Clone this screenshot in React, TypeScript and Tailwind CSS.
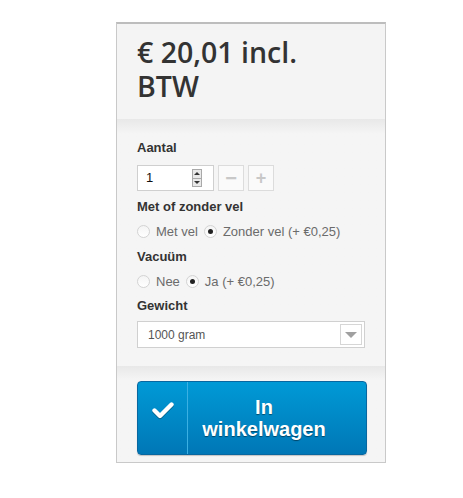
import React from "react";

function Radio({ checked, label }: { checked?: boolean; label: string }) {
  return (
    <label className="flex items-center gap-[6px] mr-[6px]">
      <span className="flex h-[13px] w-[13px] items-center justify-center rounded-full border border-[#d3d3d3] bg-gradient-to-b from-[#f4f4f4] to-white">
        {checked && <span className="h-[5px] w-[5px] rounded-full bg-[#222]" />}
      </span>
      <span className="text-[13px] text-[#6b6b6b]">{label}</span>
    </label>
  );
}

export default function App() {
  return (
    <div className="min-h-[498px] bg-white pt-[22px] font-['Liberation_Sans',Arial,sans-serif]">
      <div className="ml-[116px] w-[270px] border border-t-2 border-[#c9c9c9] border-t-[#bdbdbd] bg-[#f4f4f4]">
        <div className="px-[20px] pt-[11px] pb-[16px]">
          <h1 className="font-['Open_Sans',sans-serif] text-[28.5px] font-semibold leading-[34px] text-[#333]">
            € 20,01 incl.
            <br />
            BTW
          </h1>
        </div>

        <div className="bg-gradient-to-b from-[#e8e8e8] via-[#f5f5f5] via-[6%] to-[#f5f5f5] px-[20px] pt-[20px] pb-[18px]">
          <div className="text-[13px] font-bold leading-[18px] text-[#333]">Aantal</div>
          <div className="mt-[8px] flex gap-[4px]">
            <div className="flex h-[26px] w-[77px] items-center justify-between border border-[#cfcfcf] bg-white pl-[8px] pr-[11px]">
              <span className="text-[13px] text-[#111]">1</span>
              <span className="flex h-[18px] w-[10px] flex-col border border-[#a9a9a9] bg-[#e9e9e9]">
                <span className="flex flex-1 items-center justify-center border-b border-[#a9a9a9]">
                  <span className="h-0 w-0 border-x-[3px] border-b-[3px] border-x-transparent border-b-[#333]" />
                </span>
                <span className="flex flex-1 items-center justify-center">
                  <span className="h-0 w-0 border-x-[3px] border-t-[3px] border-x-transparent border-t-[#333]" />
                </span>
              </span>
            </div>
            <div className="flex h-[26px] w-[26px] items-center justify-center border border-[#dcdcdc] bg-[#fafafa] text-[20px] font-bold leading-none text-[#c8c8c8]">
              −
            </div>
            <div className="flex h-[26px] w-[26px] items-center justify-center border border-[#dcdcdc] bg-[#fafafa] text-[18px] font-bold leading-none text-[#c8c8c8]">
              +
            </div>
          </div>

          <div className="mt-[7px] text-[13px] font-bold leading-[18px] text-[#333]">Met of zonder vel</div>
          <div className="mt-[6px] flex items-center">
            <Radio label="Met vel" />
            <Radio checked label="Zonder vel (+ €0,25)" />
          </div>

          <div className="mt-[6px] text-[13px] font-bold leading-[18px] text-[#333]">Vacuüm</div>
          <div className="mt-[6px] flex items-center">
            <Radio label="Nee" />
            <Radio checked label="Ja (+ €0,25)" />
          </div>

          <div className="mt-[6px] text-[13px] font-bold leading-[18px] text-[#333]">Gewicht</div>
          <div className="mt-[6px] flex h-[27px] w-[228px] items-center justify-between border border-[#d0d0d0] bg-white pl-[10px] pr-[2px]">
            <span className="text-[12px] text-[#555]">1000 gram</span>
            <span className="flex h-[21px] w-[22px] items-center justify-center border border-[#d6d6d6] bg-white">
              <span className="h-0 w-0 border-x-[6px] border-t-[6px] border-x-transparent border-t-[#a0a0a0]" />
            </span>
          </div>
        </div>

        <div className="bg-gradient-to-b from-[#e8e8e8] via-[#f5f5f5] via-[15%] to-[#f5f5f5] px-[20px] pt-[15px] pb-[7px]">
          <button className="flex h-[74px] w-[230px] items-stretch overflow-hidden rounded-[4px] border border-[#0867a0] bg-gradient-to-b from-[#009ad6] to-[#0077b6] shadow-[0_1px_1px_rgba(0,0,0,0.2)]">
            <span className="flex w-[50px] items-center justify-center border-r border-[#3bb0e3] pb-[16px]">
              <svg width="22" height="18" viewBox="0 0 22 18" className="drop-shadow-[0_1px_0_rgba(0,0,0,0.35)]">
                <path d="M2.5 9.5 L8 15 L19.5 3.5" fill="none" stroke="white" strokeWidth="4.4" strokeLinecap="round" strokeLinejoin="round" />
              </svg>
            </span>
            <span className="flex flex-1 items-center justify-center pr-[26px] text-center text-[20px] font-bold leading-[22px] text-white [text-shadow:0_1px_1px_rgba(0,0,0,0.45)]">
              In
              <br />
              winkelwagen
            </span>
          </button>
        </div>
      </div>
    </div>
  );
}
